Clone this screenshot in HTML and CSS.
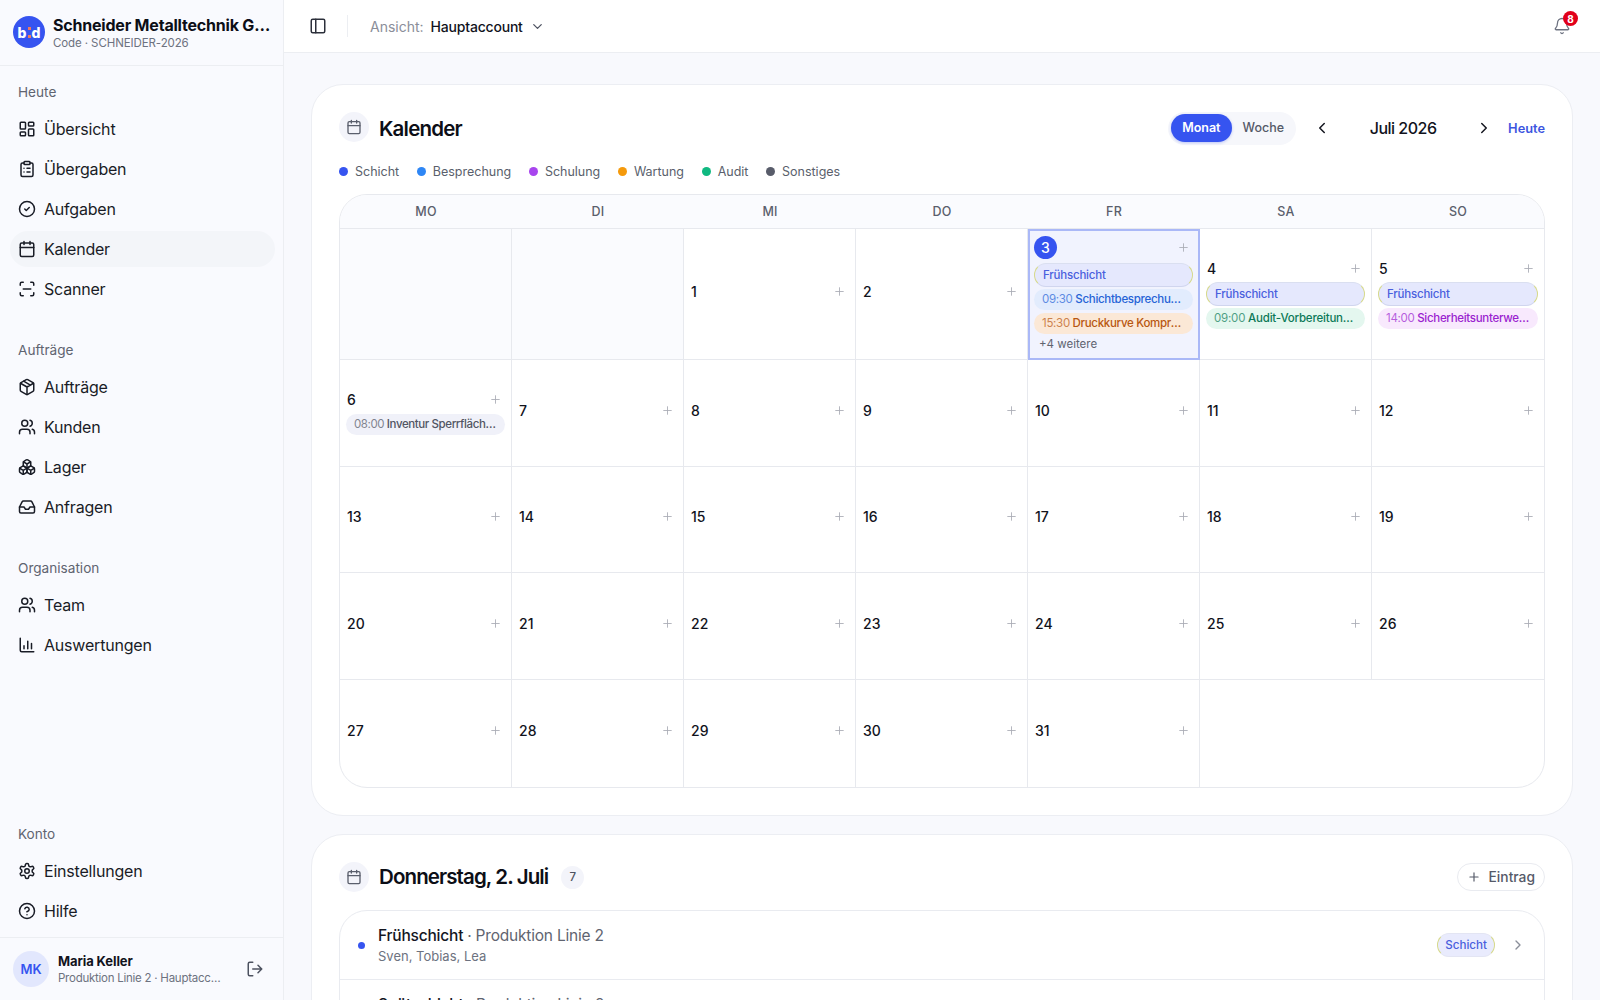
FILE: index.html
```html
<!DOCTYPE html>
<html lang="de">
<head>
<meta charset="utf-8">
<title>Kalender</title>
<link rel="stylesheet" href="styles.css">
</head>
<body>
<svg class="defs" width="0" height="0" aria-hidden="true">
  <symbol id="i-cal" viewBox="0 0 24 24"><path d="M8 2v4M16 2v4"/><rect x="3" y="4" width="18" height="18" rx="2"/><path d="M3 10h18"/></symbol>
  <symbol id="i-plus" viewBox="0 0 24 24"><path d="M5 12h14M12 5v14"/></symbol>
  <symbol id="i-users" viewBox="0 0 24 24"><path d="M16 21v-2a4 4 0 0 0-4-4H6a4 4 0 0 0-4 4v2"/><circle cx="9" cy="7" r="4"/><path d="M22 21v-2a4 4 0 0 0-3-3.87M16 3.13a4 4 0 0 1 0 7.75"/></symbol>
</svg>
<div class="app">
  <aside class="sidebar">
    <div class="brand">
      <div class="logo"><span>b</span><i></i><span>d</span></div>
      <div class="brand-text">
        <div class="brand-name">Schneider Metalltechnik GmbH</div>
        <div class="brand-code">Code · SCHNEIDER-2026</div>
      </div>
    </div>
    <nav class="nav">
      <div class="group">
        <div class="group-label">Heute</div>
        <a class="item"><svg class="ico" viewBox="0 0 24 24"><rect x="3" y="3" width="7" height="9" rx="1"/><rect x="14" y="3" width="7" height="5" rx="1"/><rect x="14" y="12" width="7" height="9" rx="1"/><rect x="3" y="16" width="7" height="5" rx="1"/></svg>Übersicht</a>
        <a class="item"><svg class="ico" viewBox="0 0 24 24"><rect x="8" y="2" width="8" height="4" rx="1"/><path d="M16 4h2a2 2 0 0 1 2 2v14a2 2 0 0 1-2 2H6a2 2 0 0 1-2-2V6a2 2 0 0 1 2-2h2"/><path d="M12 11h4M12 16h4M8 11h.01M8 16h.01"/></svg>Übergaben</a>
        <a class="item"><svg class="ico" viewBox="0 0 24 24"><circle cx="12" cy="12" r="10"/><path d="m9 12 2 2 4-4"/></svg>Aufgaben</a>
        <a class="item active"><svg class="ico"><use href="#i-cal"/></svg>Kalender</a>
        <a class="item"><svg class="ico" viewBox="0 0 24 24"><path d="M3 7V5a2 2 0 0 1 2-2h2M17 3h2a2 2 0 0 1 2 2v2M21 17v2a2 2 0 0 1-2 2h-2M7 21H5a2 2 0 0 1-2-2v-2M7 12h10"/></svg>Scanner</a>
      </div>
      <div class="group">
        <div class="group-label">Aufträge</div>
        <a class="item"><svg class="ico" viewBox="0 0 24 24"><path d="M21 8a2 2 0 0 0-1-1.73l-7-4a2 2 0 0 0-2 0l-7 4A2 2 0 0 0 3 8v8a2 2 0 0 0 1 1.73l7 4a2 2 0 0 0 2 0l7-4A2 2 0 0 0 21 16Z"/><path d="m3.3 7 8.7 5 8.7-5M12 22V12M7.5 4.27l9 5.15"/></svg>Aufträge</a>
        <a class="item"><svg class="ico"><use href="#i-users"/></svg>Kunden</a>
        <a class="item"><svg class="ico" viewBox="0 0 24 24"><path d="M2.97 12.92A2 2 0 0 0 2 14.63v3.24a2 2 0 0 0 .97 1.71l3 1.8a2 2 0 0 0 2.06 0L12 19v-5.5l-5-3-4.03 2.42Z"/><path d="m7 16.5-4.74-2.85M7 16.5l5-3M7 16.5v5.17"/><path d="M12 13.5V19l3.97 2.38a2 2 0 0 0 2.06 0l3-1.8a2 2 0 0 0 .97-1.71v-3.24a2 2 0 0 0-.97-1.71L17 10.5l-5 3Z"/><path d="m17 16.5-5-3M17 16.5l4.74-2.85M17 16.5v5.17"/><path d="M7.97 4.42A2 2 0 0 0 7 6.13v4.37l5 3 5-3V6.13a2 2 0 0 0-.97-1.71l-3-1.8a2 2 0 0 0-2.06 0l-3 1.8Z"/><path d="M12 8 7.26 5.15M12 8l4.74-2.85M12 13.5V8"/></svg>Lager</a>
        <a class="item"><svg class="ico" viewBox="0 0 24 24"><path d="M22 12h-6l-2 3h-4l-2-3H2"/><path d="M5.45 5.11 2 12v6a2 2 0 0 0 2 2h16a2 2 0 0 0 2-2v-6l-3.45-6.89A2 2 0 0 0 16.76 4H7.24a2 2 0 0 0-1.79 1.11z"/></svg>Anfragen</a>
      </div>
      <div class="group">
        <div class="group-label">Organisation</div>
        <a class="item"><svg class="ico"><use href="#i-users"/></svg>Team</a>
        <a class="item"><svg class="ico" viewBox="0 0 24 24"><path d="M3 3v16a2 2 0 0 0 2 2h16M8 17v-4M13 17V7M18 17v-7"/></svg>Auswertungen</a>
      </div>
      <div class="group group-end">
        <div class="group-label">Konto</div>
        <a class="item"><svg class="ico" viewBox="0 0 24 24"><path d="M12.22 2h-.44a2 2 0 0 0-2 2v.18a2 2 0 0 1-1 1.73l-.43.25a2 2 0 0 1-2 0l-.15-.08a2 2 0 0 0-2.73.73l-.22.38a2 2 0 0 0 .73 2.73l.15.1a2 2 0 0 1 1 1.72v.51a2 2 0 0 1-1 1.74l-.15.09a2 2 0 0 0-.73 2.73l.22.38a2 2 0 0 0 2.73.73l.15-.08a2 2 0 0 1 2 0l.43.25a2 2 0 0 1 1 1.73V20a2 2 0 0 0 2 2h.44a2 2 0 0 0 2-2v-.18a2 2 0 0 1 1-1.73l.43-.25a2 2 0 0 1 2 0l.15.08a2 2 0 0 0 2.73-.73l.22-.39a2 2 0 0 0-.73-2.73l-.15-.08a2 2 0 0 1-1-1.74v-.5a2 2 0 0 1 1-1.74l.15-.09a2 2 0 0 0 .73-2.73l-.22-.38a2 2 0 0 0-2.73-.73l-.15.08a2 2 0 0 1-2 0l-.43-.25a2 2 0 0 1-1-1.73V4a2 2 0 0 0-2-2z"/><circle cx="12" cy="12" r="3"/></svg>Einstellungen</a>
        <a class="item"><svg class="ico" viewBox="0 0 24 24"><circle cx="12" cy="12" r="10"/><path d="M9.09 9a3 3 0 0 1 5.83 1c0 2-3 3-3 3M12 17h.01"/></svg>Hilfe</a>
      </div>
    </nav>
    <div class="user">
      <div class="avatar">MK</div>
      <div class="user-text">
        <div class="user-name">Maria Keller</div>
        <div class="user-role">Produktion Linie 2 · Hauptaccount</div>
      </div>
      <svg class="ico logout" viewBox="0 0 24 24"><path d="M9 21H5a2 2 0 0 1-2-2V5a2 2 0 0 1 2-2h4M16 17l5-5-5-5M21 12H9"/></svg>
    </div>
  </aside>
  <div class="main">
    <header class="topbar">
      <svg class="ico panel" viewBox="0 0 24 24"><rect x="3" y="3" width="18" height="18" rx="2"/><path d="M9 3v18"/></svg>
      <span class="divider"></span>
      <span class="view-label">Ansicht:</span>
      <span class="view-value">Hauptaccount</span>
      <svg class="chev-down" viewBox="0 0 24 24"><path d="m6 9 6 6 6-6"/></svg>
      <div class="bell">
        <svg class="bell-ico" viewBox="0 0 24 24"><path d="M10.27 21a2 2 0 0 0 3.46 0"/><path d="M3.26 15.33A1 1 0 0 0 4 17h16a1 1 0 0 0 .74-1.67C19.41 13.96 18 12.5 18 8A6 6 0 0 0 6 8c0 4.5-1.41 5.96-2.74 7.33"/></svg>
        <span class="badge">8</span>
      </div>
    </header>
    <main class="content">
      <section class="card cal-card">
        <div class="card-head">
          <span class="head-ico"><svg class="ico-s"><use href="#i-cal"/></svg></span>
          <h1 class="title">Kalender</h1>
          <div class="controls">
            <div class="toggle"><span class="tog on">Monat</span><span class="tog">Woche</span></div>
            <svg class="chev" viewBox="0 0 24 24"><path d="m15 18-6-6 6-6"/></svg>
            <span class="month">Juli 2026</span>
            <svg class="chev" viewBox="0 0 24 24"><path d="m9 18 6-6-6-6"/></svg>
            <span class="today">Heute</span>
          </div>
        </div>
        <div class="legend">
          <span class="leg"><i class="dot c-schicht"></i>Schicht</span>
          <span class="leg"><i class="dot c-bespr"></i>Besprechung</span>
          <span class="leg"><i class="dot c-schul"></i>Schulung</span>
          <span class="leg"><i class="dot c-wart"></i>Wartung</span>
          <span class="leg"><i class="dot c-audit"></i>Audit</span>
          <span class="leg"><i class="dot c-sonst"></i>Sonstiges</span>
        </div>
        <div class="cal">
          <div class="dow">MO</div><div class="dow">DI</div><div class="dow">MI</div><div class="dow">DO</div><div class="dow">FR</div><div class="dow">SA</div><div class="dow">SO</div>

          <div class="cell empty"></div>
          <div class="cell empty"></div>
          <div class="cell"><div class="day"><b>1</b><svg class="add"><use href="#i-plus"/></svg></div></div>
          <div class="cell"><div class="day"><b>2</b><svg class="add"><use href="#i-plus"/></svg></div></div>
          <div class="cell today-cell">
            <div class="day"><b class="today-num">3</b><svg class="add"><use href="#i-plus"/></svg></div>
            <div class="pill shift">Frühschicht</div>
            <div class="pill p-bespr"><span class="t">09:30</span> Schichtbesprechung Linie 2</div>
            <div class="pill p-wart"><span class="t">15:30</span> Druckkurve Kompressor prüfen</div>
            <div class="more">+4 weitere</div>
          </div>
          <div class="cell">
            <div class="day"><b>4</b><svg class="add"><use href="#i-plus"/></svg></div>
            <div class="pill shift">Frühschicht</div>
            <div class="pill p-audit"><span class="t">09:00</span> Audit-Vorbereitung Halle 3</div>
          </div>
          <div class="cell">
            <div class="day"><b>5</b><svg class="add"><use href="#i-plus"/></svg></div>
            <div class="pill shift">Frühschicht</div>
            <div class="pill p-schul"><span class="t">14:00</span> Sicherheitsunterweisung Team</div>
          </div>

          <div class="cell">
            <div class="day"><b>6</b><svg class="add"><use href="#i-plus"/></svg></div>
            <div class="pill p-sonst"><span class="t">08:00</span> Inventur Sperrflächen Lager</div>
          </div>
          <div class="cell"><div class="day"><b>7</b><svg class="add"><use href="#i-plus"/></svg></div></div>
          <div class="cell"><div class="day"><b>8</b><svg class="add"><use href="#i-plus"/></svg></div></div>
          <div class="cell"><div class="day"><b>9</b><svg class="add"><use href="#i-plus"/></svg></div></div>
          <div class="cell"><div class="day"><b>10</b><svg class="add"><use href="#i-plus"/></svg></div></div>
          <div class="cell"><div class="day"><b>11</b><svg class="add"><use href="#i-plus"/></svg></div></div>
          <div class="cell"><div class="day"><b>12</b><svg class="add"><use href="#i-plus"/></svg></div></div>

          <div class="cell"><div class="day"><b>13</b><svg class="add"><use href="#i-plus"/></svg></div></div>
          <div class="cell"><div class="day"><b>14</b><svg class="add"><use href="#i-plus"/></svg></div></div>
          <div class="cell"><div class="day"><b>15</b><svg class="add"><use href="#i-plus"/></svg></div></div>
          <div class="cell"><div class="day"><b>16</b><svg class="add"><use href="#i-plus"/></svg></div></div>
          <div class="cell"><div class="day"><b>17</b><svg class="add"><use href="#i-plus"/></svg></div></div>
          <div class="cell"><div class="day"><b>18</b><svg class="add"><use href="#i-plus"/></svg></div></div>
          <div class="cell"><div class="day"><b>19</b><svg class="add"><use href="#i-plus"/></svg></div></div>

          <div class="cell"><div class="day"><b>20</b><svg class="add"><use href="#i-plus"/></svg></div></div>
          <div class="cell"><div class="day"><b>21</b><svg class="add"><use href="#i-plus"/></svg></div></div>
          <div class="cell"><div class="day"><b>22</b><svg class="add"><use href="#i-plus"/></svg></div></div>
          <div class="cell"><div class="day"><b>23</b><svg class="add"><use href="#i-plus"/></svg></div></div>
          <div class="cell"><div class="day"><b>24</b><svg class="add"><use href="#i-plus"/></svg></div></div>
          <div class="cell"><div class="day"><b>25</b><svg class="add"><use href="#i-plus"/></svg></div></div>
          <div class="cell"><div class="day"><b>26</b><svg class="add"><use href="#i-plus"/></svg></div></div>

          <div class="cell last"><div class="day"><b>27</b><svg class="add"><use href="#i-plus"/></svg></div></div>
          <div class="cell last"><div class="day"><b>28</b><svg class="add"><use href="#i-plus"/></svg></div></div>
          <div class="cell last"><div class="day"><b>29</b><svg class="add"><use href="#i-plus"/></svg></div></div>
          <div class="cell last"><div class="day"><b>30</b><svg class="add"><use href="#i-plus"/></svg></div></div>
          <div class="cell last"><div class="day"><b>31</b><svg class="add"><use href="#i-plus"/></svg></div></div>
          <div class="cell last blank"></div>
          <div class="cell last blank"></div>
        </div>
      </section>
      <section class="card day-card">
        <div class="card-head">
          <span class="head-ico"><svg class="ico-s"><use href="#i-cal"/></svg></span>
          <h2 class="title">Donnerstag, 2. Juli</h2>
          <span class="count">7</span>
          <button class="add-btn"><svg class="ico-s"><use href="#i-plus"/></svg>Eintrag</button>
        </div>
        <div class="list">
          <div class="row">
            <i class="dot c-schicht row-dot"></i>
            <div class="row-text">
              <div class="row-title">Frühschicht <span class="row-loc">· Produktion Linie 2</span></div>
              <div class="row-sub">Sven, Tobias, Lea</div>
            </div>
            <span class="tag">Schicht</span>
            <svg class="row-chev" viewBox="0 0 24 24"><path d="m9 18 6-6-6-6"/></svg>
          </div>
          <div class="row">
            <i class="dot c-schicht row-dot"></i>
            <div class="row-text">
              <div class="row-title">Spätschicht <span class="row-loc">· Produktion Linie 2</span></div>
              <div class="row-sub">Marco, Anna, Jonas</div>
            </div>
            <span class="tag">Schicht</span>
            <svg class="row-chev" viewBox="0 0 24 24"><path d="m9 18 6-6-6-6"/></svg>
          </div>
        </div>
      </section>
    </main>
  </div>
</div>
</body>
</html>
```
FILE: styles.css
```css
* { box-sizing: border-box; }
html, body { margin: 0; height: 100%; overflow: hidden; }
body { font-family: Inter, "Liberation Sans", sans-serif; color: #11131c; background: #f8f9fd; }
.defs { position: absolute; }
svg { fill: none; stroke: currentColor; stroke-width: 2; stroke-linecap: round; stroke-linejoin: round; flex: none; }
.app { display: flex; height: 1000px; }

.sidebar { width: 284px; flex: none; display: flex; flex-direction: column; background: #f9fafe; border-right: 1px solid #eceef2; }
.brand { height: 66px; flex: none; display: flex; align-items: center; gap: 8px; padding: 1px 6px 0 13px; border-bottom: 1px solid #eceef2; }
.logo { width: 32px; height: 32px; margin-top: -2px; border-radius: 50%; background: #3654f0; color: #fff; display: flex; align-items: center; justify-content: center; gap: 1px; font-size: 14px; font-weight: 800; flex: none; }
.logo i { width: 3px; height: 11px; background: radial-gradient(circle at 50% 1.5px, #f0795e 1.5px, transparent 1.6px), radial-gradient(circle at 50% 9.5px, #f0795e 1.5px, transparent 1.6px); }
.brand-text { min-width: 0; flex: 1; }
.brand-name { font-size: 16px; line-height: 20px; font-weight: 700; letter-spacing: -0.2px; white-space: nowrap; overflow: hidden; text-overflow: ellipsis; color: #0c0e16; }
.brand-code { font-size: 11.5px; line-height: 16px; letter-spacing: -0.1px; color: #6d7280; }

.nav { flex: 1; display: flex; flex-direction: column; gap: 35px; padding: 17.5px 8px 0 10px; }
.group { display: flex; flex-direction: column; gap: 4px; }
.group-end { margin-top: auto; padding-bottom: 8px; }
.group-label { font-size: 13.6px; line-height: 17px; color: #5f6470; padding: 0 8px; margin-bottom: 6px; }
.item { height: 36px; display: flex; align-items: center; gap: 8px; padding: 0 8px; border-radius: 18px; font-size: 16px; color: #191c26; letter-spacing: -0.2px; }
.item.active { background: #f3f5f9; }
.ico { width: 18px; height: 18px; stroke-width: 2; }

.user { height: 63px; flex: none; display: flex; align-items: center; gap: 9px; padding: 0 19px 0 13px; border-top: 1px solid #eceef2; }
.avatar { width: 36px; height: 36px; border-radius: 50%; background: #e2e7fd; color: #3654f0; display: flex; align-items: center; justify-content: center; font-size: 13px; font-weight: 600; flex: none; }
.user-text { min-width: 0; flex: 1; }
.user-name { font-size: 13px; line-height: 18px; font-weight: 700; letter-spacing: -0.1px; }
.user-role { font-size: 11.5px; line-height: 16px; letter-spacing: -0.25px; color: #6d7280; white-space: nowrap; overflow: hidden; text-overflow: ellipsis; }
.logout { margin-left: 10px; color: #4d5260; }

.main { flex: 1; min-width: 0; display: flex; flex-direction: column; }
.topbar { height: 53px; flex: none; display: flex; align-items: center; padding: 0 29px 0 25px; background: #fff; border-bottom: 1px solid #eceef2; }
.panel { color: #2c303b; }
.divider { width: 1px; height: 22px; background: #eceef2; margin: 0 22px 0 20px; }
.view-label { font-size: 14px; color: #8a8e99; margin-right: 7px; }
.view-value { font-size: 14px; font-weight: 500; letter-spacing: -0.2px; color: #11131c; }
.chev-down { width: 15px; height: 15px; margin-left: 7px; color: #4d5260; }
.bell { margin-left: auto; position: relative; width: 18px; height: 18px; color: #6d7280; }
.bell-ico { width: 18px; height: 18px; stroke-width: 1.7; display: block; }
.badge { position: absolute; left: 10px; top: -6px; width: 15px; height: 15px; border-radius: 50%; background: #e1001a; color: #fff; font-size: 10px; font-weight: 700; display: flex; align-items: center; justify-content: center; }

.content { flex: 1; min-height: 0; overflow: hidden; padding: 31px 27px 0; display: flex; flex-direction: column; gap: 18px; }
.card { flex: none; background: #fff; border: 1px solid #eceef3; border-radius: 32px; padding: 27px; }
.cal-card { height: 732px; }
.card-head { display: flex; align-items: center; height: 30px; }
.head-ico { width: 30px; height: 30px; border-radius: 50%; background: #f3f4fa; color: #5a5f6c; display: flex; align-items: center; justify-content: center; margin-right: 10px; }
.ico-s { width: 16px; height: 16px; stroke-width: 2; }
.title { margin: 4px 0 0; font-size: 20.5px; line-height: 28px; font-weight: 600; letter-spacing: -0.8px; color: #0c0e16; }
.controls { margin: 2px 0 0 auto; display: flex; align-items: center; }
.toggle { display: flex; align-items: center; height: 33px; padding: 0 1px 0 3px; border-radius: 17px; background: #f6f7fb; margin-right: 17px; }
.tog { height: 28px; padding: 0 11px; border-radius: 14px; font-size: 12.5px; line-height: 28px; font-weight: 500; color: #555a68; }
.tog.on { background: #3654f0; color: #fff; font-weight: 600; box-shadow: 0 1px 3px rgba(54,84,240,.3); }
.chev { width: 18px; height: 18px; color: #14161f; }
.month { width: 144px; text-align: center; font-size: 16px; font-weight: 500; letter-spacing: -0.5px; }
.today { margin-left: 15px; font-size: 12.8px; font-weight: 600; color: #3c55e0; }

.legend { display: flex; gap: 17.6px; margin-top: 20px; height: 18px; align-items: center; }
.leg { display: flex; align-items: center; gap: 7px; font-size: 12.5px; color: #5a5f6c; }
.dot { width: 9px; height: 9px; border-radius: 50%; flex: none; display: block; }
.c-schicht { background: #3654f0; }
.c-bespr { background: #2e86f5; }
.c-schul { background: #a845ee; }
.c-wart { background: #f59a0c; }
.c-audit { background: #10b981; }
.c-sonst { background: #585c6a; }

.cal { margin-top: 14px; display: grid; grid-template-columns: repeat(7, 1fr); grid-template-rows: 34px 131px 107px 106px 107px 107px; border: 1px solid #e7e9ee; border-radius: 28px; overflow: hidden; }
.dow { display: flex; align-items: center; justify-content: center; background: #fafbfe; font-size: 12.5px; font-weight: 500; letter-spacing: 0.2px; color: #5a5f6c; border-bottom: 1px solid #e7e9ee; }
.cell { min-width: 0; display: flex; flex-direction: column; justify-content: center; gap: 2.5px; padding: 6px 6px 9px; border-right: 1px solid #e7e9ee; border-bottom: 1px solid #e7e9ee; }
.cell:nth-child(7n) { border-right: 0; }
.cell.last { border-bottom: 0; }
.cell.blank { border-right: 0; }
.cell.empty { background: #fafbfe; }
.day { display: flex; align-items: center; justify-content: space-between; height: 24px; padding: 0 3px 0 1px; flex: none; }
.day:last-child { margin-bottom: 3px; }
.day b { font-size: 14px; font-weight: 500; color: #11131c; }
.add { width: 13px; height: 13px; color: #a9acb5; stroke-width: 1.6; }
.today-cell { background: #f1f3fe; outline: 2px solid #aab8f7; outline-offset: -2px; justify-content: flex-start; padding-top: 7px; }
.today-cell .day { height: 23px; padding-left: 0; margin-bottom: 2px; }
.today-num { width: 23px; height: 23px; border-radius: 50%; background: #3654f0; display: flex; align-items: center; justify-content: center; color: #fff !important; }
.pill { height: 21px; border-radius: 11px; padding: 0 7px 0 8px; font-size: 11.5px; line-height: 21px; font-weight: 500; white-space: nowrap; overflow: hidden; text-overflow: ellipsis; flex: none; letter-spacing: -0.3px; }
.pill .t { font-weight: 400; opacity: .7; }
.shift { height: 24px; line-height: 22px; margin-top: -1px; background: #e5e8fd; color: #4a5fdd; border: 1px solid #d6d98a; border-top-color: #dadff0; border-bottom-color: #d0d5ee; border-radius: 12px; letter-spacing: -0.2px; }
.p-bespr { background: #e2ecfd; color: #2563d6; }
.p-wart { background: #fbe8d6; color: #b8560f; }
.p-audit { background: #e4f7ef; color: #0c7a58; letter-spacing: -0.2px; }
.p-schul { background: #f8e9fd; color: #9a22cf; }
.p-sonst { background: #f0f1f9; color: #515563; letter-spacing: -0.4px; }
.more { font-size: 11.5px; line-height: 18px; margin-top: -1px; color: #5f6470; padding-left: 5px; }

.day-card { flex: 1; padding-bottom: 0; }
.day-card .title { margin-top: 0; letter-spacing: -0.9px; }
.count { width: 23px; height: 23px; margin-left: 13px; border-radius: 50%; background: #f3f4fa; color: #4d5260; display: flex; align-items: center; justify-content: center; font-size: 11.5px; font-weight: 500; }
.add-btn { margin-left: auto; height: 28px; padding: 0 9px; display: flex; align-items: center; gap: 8px; background: #fff; border: 1px solid #e9ebf0; border-radius: 14px; font: 500 13.8px Inter, "Liberation Sans", sans-serif; color: #555a68; }
.add-btn .ico-s { width: 14px; height: 14px; }
.list { margin-top: 18px; border: 1px solid #e9ebf0; border-radius: 28px; }
.row { height: 69px; display: flex; align-items: center; padding: 0 18px; border-bottom: 1px solid #e9ebf0; }
.row-dot { width: 7px; height: 7px; }
.row-text { flex: 1; margin-left: 13px; }
.row-title { font-size: 15.5px; line-height: 22px; font-weight: 500; letter-spacing: -0.2px; color: #14161f; }
.row-loc { font-weight: 400; color: #5f6470; }
.row-sub { font-size: 13px; line-height: 19px; color: #6d7280; }
.tag { height: 24px; padding: 0 7px; border-radius: 12px; background: #e9ebfd; border: 1px solid #d6d98a; border-top-color: #e3e5f3; border-bottom-color: #e3e5f3; color: #4a5fdd; font-size: 11.6px; line-height: 22px; font-weight: 500; }
.row-chev { width: 16px; height: 16px; margin-left: 15px; color: #8a8e99; }
```
